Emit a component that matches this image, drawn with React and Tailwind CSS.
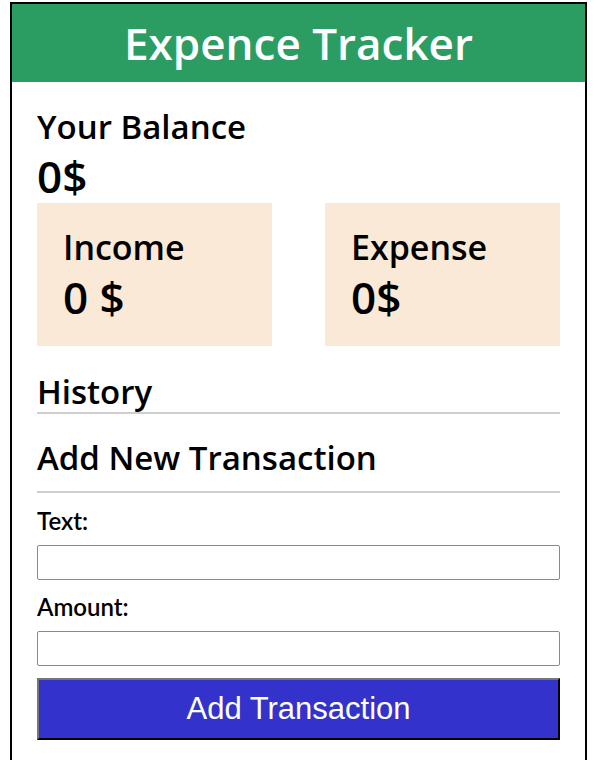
import React from 'react';

const Card = ({ title, value }) => (
    <div className="w-[235px] h-[143px] bg-[#fae9d6] pl-[26px] pt-[24px]">
        <h3 className="text-[34px] leading-[40px] font-semibold text-black">{title}</h3>
        <p className="text-[44px] leading-[50px] font-semibold text-black mt-[5px]">{value}</p>
    </div>
);

const App = () => {
    return (
        <div className="bg-white min-h-[760px] pt-[2px]" style={{ fontFamily: '"Open Sans", "Noto Sans", sans-serif' }}>
            <div className="ml-[10px] w-[577px] min-h-[758px] border-2 border-b-0 border-black">
                <header className="h-[78px] bg-[#2b9d62] flex items-center justify-center">
                    <h1 className="text-[44px] font-semibold text-white">Expence Tracker</h1>
                </header>

                <div className="px-[25px]">
                    <h2 className="text-[33px] leading-[38px] font-semibold text-black mt-[26px]">Your Balance</h2>
                    <p className="text-[44px] leading-[50px] font-semibold text-black mt-[5px]">0$</p>

                    <div className="flex justify-between mt-[2px]">
                        <Card title="Income" value="0 $" />
                        <Card title="Expense" value="0$" />
                    </div>

                    <h3 className="text-[33px] leading-[38px] font-semibold text-black mt-[27px]">History</h3>
                    <div className="h-[2px] bg-[#cfcfcf] mt-[1px]" />

                    <h3 className="text-[33px] leading-[38px] font-semibold text-black mt-[25px]">Add New Transaction</h3>
                    <div className="h-[2px] bg-[#cfcfcf] mt-[14px]" />

                    <form className="flex flex-col" style={{ fontFamily: 'Lato, sans-serif' }} onSubmit={e => e.preventDefault()}>
                        <label className="text-[24px] leading-[24px] font-semibold text-black mt-[16px]">Text:</label>
                        <input type="text" className="h-[35px] mt-[12px] border border-[#8a8a8a] rounded-[2px] bg-white" />
                        <label className="text-[24px] leading-[24px] font-semibold text-black mt-[15px]">Amount:</label>
                        <input type="number" className="h-[35px] mt-[12px] border border-[#8a8a8a] rounded-[2px] bg-white" />
                        <button
                            type="submit"
                            className="h-[62px] mt-[12px] bg-[#3333cc] text-white text-[31px] border-2 border-t-[#767676] border-l-[#767676] border-r-black border-b-black"
                            style={{ fontFamily: '"Liberation Sans", Arial, sans-serif' }}
                        >
                            Add Transaction
                        </button>
                    </form>
                </div>
            </div>
        </div>
    );
};

export default App;
